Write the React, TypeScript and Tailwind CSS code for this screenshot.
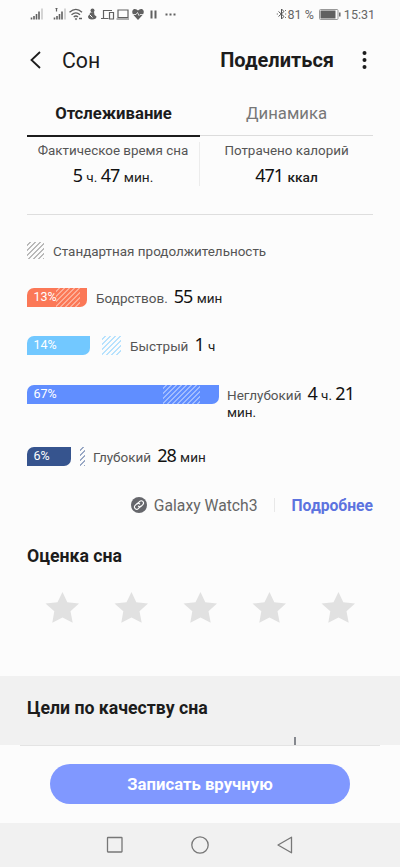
import React from 'react';

interface Stage {
  id: string;
  percent: string;
  name: string;
  barClass: string;
  typicalClass: string;
  labelClass: string;
  stroke: string;
  typicalWidth: number;
  time: React.ReactNode;
}

const Num: React.FC<{ children: React.ReactNode }> = ({ children }) => (
  <span className="mr-[1px] font-['Noto_Sans'] text-[18px] tracking-[-1px] text-[#111]">{children}</span>
);

// Diagonal lines, clipped by the svg's own box
const Hatch: React.FC<{ width: number; height: number; stroke: string; step?: number }> = ({
  width,
  height,
  stroke,
  step = 5,
}) => {
  const count = Math.ceil((width + height) / step);
  const d = Array.from({ length: count }, (_, i) => {
    const x = 3.5 + i * step;
    return `M${x} 0L${x - height} ${height}`;
  }).join('');

  return (
    <svg width={width} height={height} className="block shrink-0 overflow-hidden">
      <path d={d} stroke={stroke} strokeWidth="1" fill="none" />
    </svg>
  );
};

const stages: Stage[] = [
  {
    id: 'awake',
    percent: '13%',
    name: 'Бодрствов.',
    barClass: 'w-[60px] bg-[#fb7857]',
    typicalClass: '-ml-[31px] mr-[7px]',
    labelClass: 'ml-[9px]',
    stroke: '#ffe2d9',
    typicalWidth: 24,
    time: <><Num>55</Num> мин</>,
  },
  {
    id: 'rem',
    percent: '14%',
    name: 'Быстрый',
    barClass: 'w-[63px] bg-[#72c8ff]',
    typicalClass: 'ml-[12px]',
    labelClass: 'ml-[9px]',
    stroke: '#72c8ff',
    typicalWidth: 19,
    time: <><Num>1</Num> ч</>,
  },
  {
    id: 'light',
    percent: '67%',
    name: 'Неглубокий',
    barClass: 'w-[192px] bg-[#608eff]',
    typicalClass: '-ml-[56px] mr-[19px]',
    labelClass: 'ml-[8px]',
    stroke: '#e2eaff',
    typicalWidth: 37,
    time: <><Num>4</Num> ч. <Num>21</Num><br />мин.</>,
  },
  {
    id: 'deep',
    percent: '6%',
    name: 'Глубокий',
    barClass: 'w-[44px] bg-[#36548e]',
    typicalClass: 'ml-[9px]',
    labelClass: 'ml-[8px]',
    stroke: '#36548e',
    typicalWidth: 5,
    time: <><Num>28</Num> мин</>,
  },
];

const StatusBar: React.FC = () => (
  <div className="flex h-7 items-center pl-[30px] pr-[25px] text-[#666]">
    <svg width="150" height="14" viewBox="0 0 150 14" fill="none" stroke="#606060">
      {/* Signal strength, both SIMs */}
      <path d="M1.500 12.500v-2M4 12.500V9M6.500 12.500V7M9 12.500V4.500" strokeWidth="1.600" />
      <path d="M12 12.500V1.500" stroke="#c4c4c4" strokeWidth="1.400" />
      <path d="M24.500 12.500v-2M27 12.500V9M29.500 12.500V7M32 12.500V4.500" strokeWidth="1.600" />
      <path d="M35 12.500V1.500" stroke="#c4c4c4" strokeWidth="1.400" />
      <path d="M26.500 1v3.500M25.500 1.500h2" strokeWidth="1.200" />
      {/* Wi-Fi */}
      <path d="M39.500 5.200Q46 -.5 52 5.200M41.500 7.800Q46 4 50 7.800M43.700 10Q46 8 48 10" strokeWidth="1.300" />
      <circle cx="46" cy="12" r=".8" fill="#606060" strokeWidth=".5" />
      <path d="M49 11.500h3" strokeWidth="1.500" />
      {/* Music assistant */}
      <circle cx="62.500" cy="3.500" r="2" fill="#606060" stroke="none" />
      <path d="M60.500 5.500L58 9.500q0 3 4 3 4.500 0 4.500-3l-2-1.500-.5-3z" fill="#606060" stroke="none" />
      <path d="M59.500 7.500l3 3" stroke="#fbfbfb" />
      {/* Devices */}
      <path d="M73.500 11V3.500H82M71 11.500h7.500M79.500 5.500h4v6.500h-4z" strokeWidth="1.200" />
      <path d="M88 3h10v7.500H88zM86.500 12h12.500" strokeWidth="1.200" />
      {/* Health */}
      <path d="M108 13L103 7.500Q101 3.500 104 2q2.500-.5 4 1.500 1.500-2 4-1.500 3 1.500 1 5.500z" fill="#606060" stroke="none" />
      <path d="M103 7.500h3l1.500-2 1.500 3 1-1h3" stroke="#fbfbfb" strokeWidth=".8" />
      <path d="M121.500 3.500v8M125.500 3.500v8" strokeWidth="2" />
      <path d="M135.500 7.500h2M139.500 7.500h2M143.500 7.500h2" strokeWidth="1.800" />
    </svg>
    <div className="ml-auto flex items-center">
      <svg width="11" height="12" viewBox="0 0 11 12" fill="none" stroke="#555" strokeWidth="1">
        <path d="M2.500 3.500l5.500 5L5.500 11V1L8 3.500l-5.500 5" />
        <path d="M.8 6h1M9.200 6h1M9 3l.8-.8M9 9l.8.8" />
      </svg>
      <span className="ml-px mt-px text-[12.500px] leading-[14px]">81 %</span>
      <svg className="ml-[5px]" width="22" height="11" viewBox="0 0 22 11" fill="none">
        <rect x=".5" y=".5" width="18.500" height="10" rx="1" stroke="#999" />
        <rect x="1.500" y="1.500" width="15" height="8" fill="#606060" />
        <path d="M20.800 3.500v4" stroke="#666" strokeWidth="1.500" />
      </svg>
      <span className="ml-[3px] mt-px text-[12.500px] leading-[14px]">15:31</span>
    </div>
  </div>
);

const Header: React.FC = () => (
  <header className="flex h-[64px] items-center pl-[30px] pr-[33px] text-[#1c1c1c]">
    <svg width="11" height="18" viewBox="0 0 11 18" fill="none" stroke="#1c1c1c" strokeWidth="1.800">
      <path d="M10 1L1.500 9l8.500 8" />
    </svg>
    <h1 className="ml-[21px] mt-[2px] text-[21.300px]">Сон</h1>
    <span className="ml-auto text-[20px] font-bold">Поделиться</span>
    <svg className="ml-[28px]" width="5" height="18" viewBox="0 0 5 18" fill="#1c1c1c">
      <circle cx="2.500" cy="2" r="2" />
      <circle cx="2.500" cy="9" r="2" />
      <circle cx="2.500" cy="16" r="2" />
    </svg>
  </header>
);

const StageRow: React.FC<{ stage: Stage }> = ({ stage }) => (
  <div className="flex items-start">
    <div
      className={`flex h-[19px] shrink-0 items-center rounded-tl-[7px] rounded-br-[7px] pl-[6.500px] text-[12.500px] text-white ${stage.barClass}`}
    >
      {stage.percent}
    </div>
    <div className={`shrink-0 ${stage.typicalClass}`}>
      <Hatch width={stage.typicalWidth} height={19} stroke={stage.stroke} />
    </div>
    <div className={`whitespace-nowrap text-[13.500px] leading-[17px] text-[#222] ${stage.labelClass}`}>
      <span className="mr-[6px] text-[#555]">{stage.name}</span>
      {stage.time}
    </div>
  </div>
);

export default function App() {
  return (
    <div className="flex h-[867px] w-[400px] flex-col overflow-hidden bg-[#fcfcfc] font-[Roboto,sans-serif] text-[#1c1c1c]">
      <StatusBar />
      <Header />

      {/* Tabs */}
      <div className="mx-[27px] grid h-[42px] shrink-0 grid-cols-2 text-center text-[16.700px] leading-[43px]">
        <div className="border-b-[2px] border-[#1c1c1c] font-bold">Отслеживание</div>
        <div className="mb-px border-b border-[#dcdcdc] text-[#777]">Динамика</div>
      </div>

      {/* Totals */}
      <div className="mx-[27px] h-[81px] shrink-0 border-b border-[#dedede] pt-[8px]">
        <div className="grid h-[43px] grid-cols-2 text-center">
          <div className="border-r border-[#ececec]">
            <div className="text-[13.400px] leading-[17px] text-[#555]">Фактическое время сна</div>
            <div className="mt-[7px] text-[13.700px] leading-[18px]"><Num>5</Num> ч. <Num>47</Num> мин.</div>
          </div>
          <div>
            <div className="text-[13.400px] leading-[17px] text-[#555]">Потрачено калорий</div>
            <div className="mt-[7px] text-[13.700px] font-medium leading-[18px]"><span className="font-normal"><Num>471</Num></span> ккал</div>
          </div>
        </div>
      </div>

      {/* Sleep stages */}
      <div className="mx-[27px] mt-[27px] flex h-[17px] shrink-0 items-center text-[13.450px] text-[#555]">
        <Hatch width={17} height={17} stroke="#777" step={5} />
        <span className="ml-[9px] mt-[3px]">Стандартная продолжительность</span>
      </div>
      <div className="mx-[27px] mt-[29px] grid h-[180px] shrink-0 grid-rows-[48px_49px_62px_20px]">
        {stages.map((stage) => (
          <StageRow key={stage.id} stage={stage} />
        ))}
      </div>

      <div className="mx-[27px] mt-[26px] flex h-[22px] shrink-0 items-center justify-end text-[15.700px]">
        <svg width="16" height="16" viewBox="0 0 16 16" fill="none">
          <circle cx="8" cy="8" r="8" fill="#66676c" />
          <g transform="rotate(-45 8 8)" stroke="#fff" strokeWidth="1.100" strokeLinecap="round">
            <path d="M8.500 10H5a2.200 2.200 0 0 1 0-4.400h2.500q1.800.2 1.800 2" />
            <path d="M7.500 6H11a2.200 2.200 0 0 1 0 4.400H8.500q-1.800-.2-1.800-2" />
          </g>
        </svg>
        <span className="ml-[7px] mt-[2px] text-[#666]">Galaxy Watch3</span>
        <span className="ml-[17px] h-[14px] w-px bg-[#e8e8e8]" />
        <a className="ml-[16px] mt-[2px] font-bold text-[#5c73df]">Подробнее</a>
      </div>

      {/* Rating */}
      <h2 className="mx-[27px] mt-[29px] h-[22px] shrink-0 text-[17.700px] font-bold leading-[22px]">Оценка сна</h2>
      <div className="mx-[45px] mt-[25px] flex h-[31px] shrink-0 justify-between">
        {[1, 2, 3, 4, 5].map((n) => (
          <svg key={n} width="34" height="31" viewBox="0 0 34 31" fill="#e1e1e1">
            <path d="M17.500 0L22.300 10.200 34 11.600 25.500 19.300 27.700 30.700 17.500 25.400 7.300 30.700 9.300 19.300.5 11.600 12.500 10.200z" />
          </svg>
        ))}
      </div>

      {/* Goals */}
      <div className="mt-[53px] flex h-[69px] shrink-0 flex-col bg-[#f1f1f1]">
        <h2 className="ml-[27px] mt-[21px] text-[17.700px] font-bold leading-[22px]">Цели по качеству сна</h2>
        <span className="ml-[294px] mt-auto h-[8px] w-[2px] bg-[#85888e]" />
      </div>

      <div className="flex h-[78px] shrink-0 flex-col">
        <div className="mx-5 h-px bg-[#e4e4e4]" />
        <button className="mx-[50px] mt-[18px] h-10 rounded-full bg-[#8098ff] pt-px text-[16.700px] font-bold text-white">
          Записать вручную
        </button>
      </div>

      {/* System navigation */}
      <div className="flex flex-1 justify-center bg-[#f1f1f1] pt-[13px]">
        <svg width="188" height="18" viewBox="0 0 188 18" fill="none" stroke="#777" strokeWidth="1.300">
          <rect x="1.500" y="1.500" width="14.500" height="14.500" rx=".5" />
          <circle cx="94" cy="9" r="8.200" />
          <path d="M185.500 1.200v15.600L172 9z" strokeLinejoin="round" />
        </svg>
      </div>
    </div>
  );
}
